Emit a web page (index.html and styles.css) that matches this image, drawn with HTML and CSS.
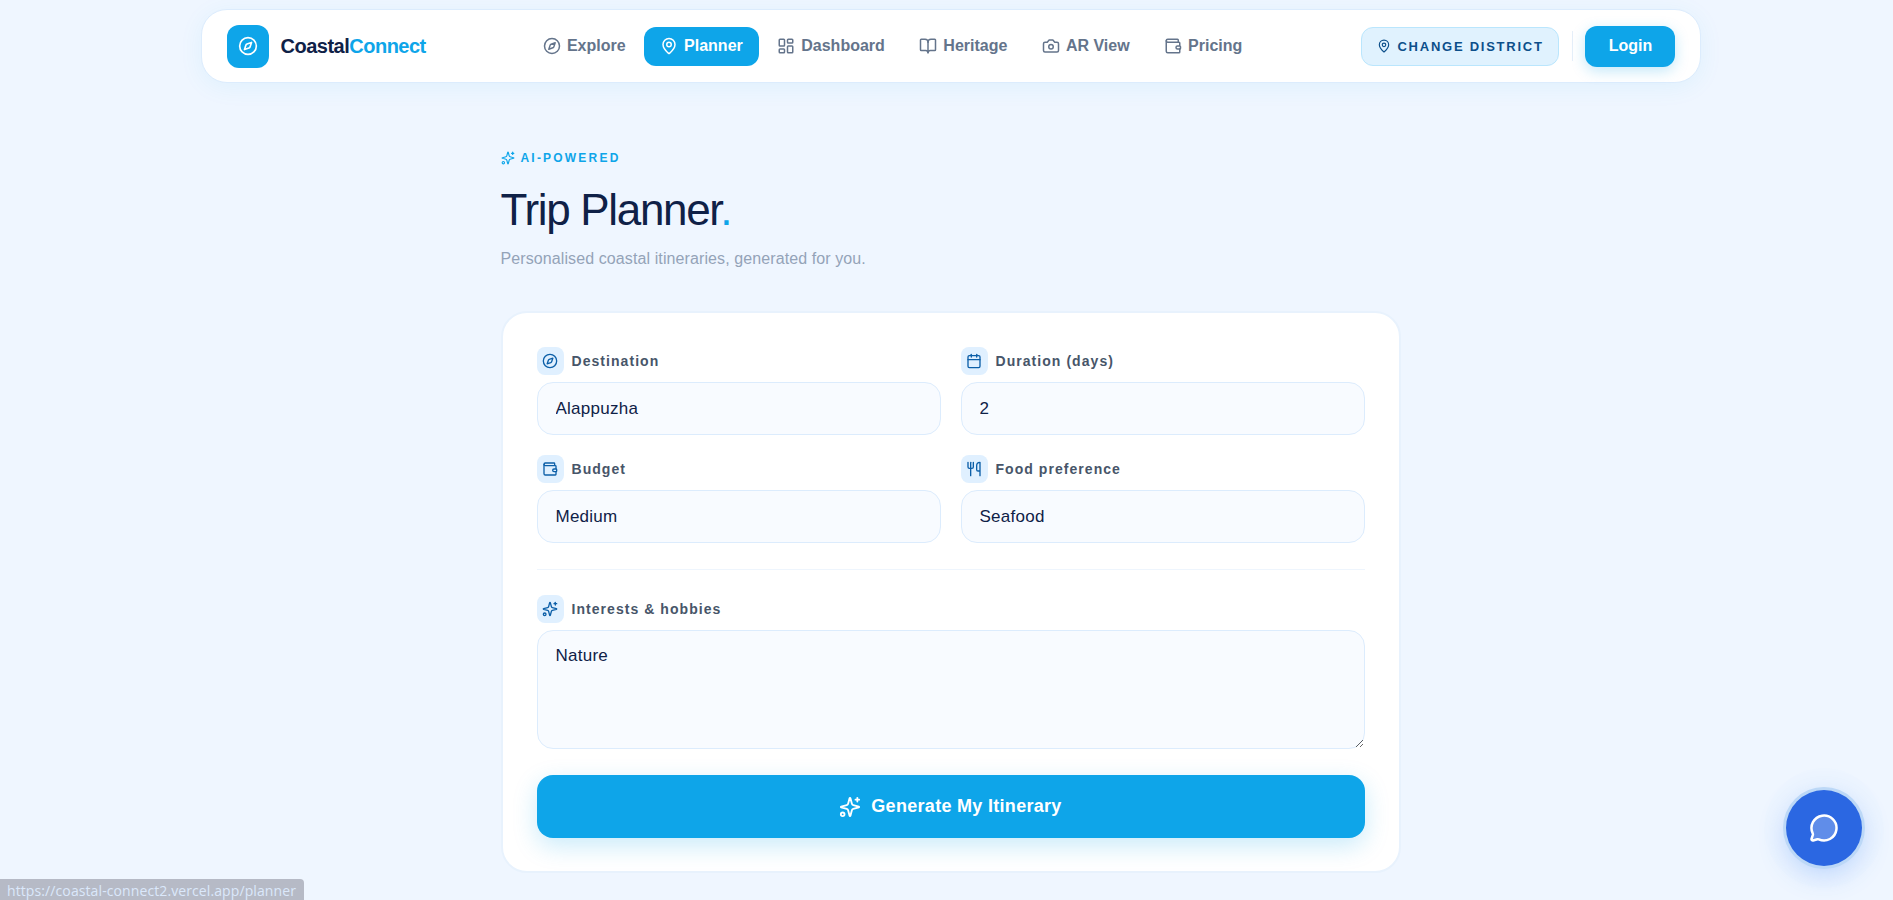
FILE: index.html
```html
<!DOCTYPE html>
<html lang="en">
<head>
  <meta charset="UTF-8" />
  <title>CoastalConnect - Trip Planner</title>
  <link rel="stylesheet" href="styles.css">
</head>
<body>
  <svg class="sprite" aria-hidden="true">
    <symbol id="i-compass" viewBox="0 0 24 24"><circle cx="12" cy="12" r="10"/><path d="m16.24 7.76-1.804 5.411a2 2 0 0 1-1.265 1.265L7.76 16.24l1.804-5.411a2 2 0 0 1 1.265-1.265z"/></symbol>
    <symbol id="i-pin" viewBox="0 0 24 24"><path d="M20 10c0 4.993-5.539 10.193-7.399 11.799a1 1 0 0 1-1.202 0C9.539 20.193 4 14.993 4 10a8 8 0 0 1 16 0"/><circle cx="12" cy="10" r="3"/></symbol>
    <symbol id="i-dashboard" viewBox="0 0 24 24"><rect x="3" y="3" width="7" height="9" rx="1"/><rect x="14" y="3" width="7" height="5" rx="1"/><rect x="14" y="12" width="7" height="9" rx="1"/><rect x="3" y="16" width="7" height="5" rx="1"/></symbol>
    <symbol id="i-book" viewBox="0 0 24 24"><path d="M12 7v14"/><path d="M3 18a1 1 0 0 1-1-1V4a1 1 0 0 1 1-1h5a4 4 0 0 1 4 4 4 4 0 0 1 4-4h5a1 1 0 0 1 1 1v13a1 1 0 0 1-1 1h-6a3 3 0 0 0-3 3 3 3 0 0 0-3-3z"/></symbol>
    <symbol id="i-camera" viewBox="0 0 24 24"><path d="M14.5 4h-5L7 7H4a2 2 0 0 0-2 2v9a2 2 0 0 0 2 2h16a2 2 0 0 0 2-2V9a2 2 0 0 0-2-2h-3l-2.5-3z"/><circle cx="12" cy="13" r="3"/></symbol>
    <symbol id="i-wallet" viewBox="0 0 24 24"><path d="M19 7V4a1 1 0 0 0-1-1H5a2 2 0 0 0 0 4h15a1 1 0 0 1 1 1v4h-3a2 2 0 0 0 0 4h3a1 1 0 0 0 1-1v-2a1 1 0 0 0-1-1"/><path d="M3 5v14a2 2 0 0 0 2 2h15a1 1 0 0 0 1-1v-4"/></symbol>
    <symbol id="i-calendar" viewBox="0 0 24 24"><path d="M8 2v4"/><path d="M16 2v4"/><rect x="3" y="4" width="18" height="18" rx="2"/><path d="M3 10h18"/></symbol>
    <symbol id="i-utensils" viewBox="0 0 24 24"><path d="M3 2v7c0 1.1.9 2 2 2h4a2 2 0 0 0 2-2V2"/><path d="M7 2v20"/><path d="M21 15V2a5 5 0 0 0-5 5v6c0 1.1.9 2 2 2h3Zm0 0v7"/></symbol>
    <symbol id="i-sparkles" viewBox="0 0 24 24"><path d="M9.937 15.5A2 2 0 0 0 8.5 14.063l-6.135-1.582a.5.5 0 0 1 0-.962L8.5 9.936A2 2 0 0 0 9.937 8.5l1.582-6.135a.5.5 0 0 1 .963 0L14.063 8.5A2 2 0 0 0 15.5 9.937l6.135 1.581a.5.5 0 0 1 0 .964L15.5 14.063a2 2 0 0 0-1.437 1.437l-1.582 6.135a.5.5 0 0 1-.963 0z"/><path d="M20 2v4"/><path d="M22 4h-4"/><circle cx="4" cy="20" r="2"/></symbol>
  </svg>

  <div class="page">
    <header class="navbar">
      <a class="brand" href="#">
        <span class="brand-mark"><svg class="icon"><use href="#i-compass"/></svg></span>
        <span class="brand-name">Coastal<span class="accent">Connect</span></span>
      </a>

      <nav class="nav-links">
        <a class="nav-link" href="#"><svg class="icon"><use href="#i-compass"/></svg>Explore</a>
        <a class="nav-link active" href="#"><svg class="icon"><use href="#i-pin"/></svg>Planner</a>
        <a class="nav-link" href="#"><svg class="icon"><use href="#i-dashboard"/></svg>Dashboard</a>
        <a class="nav-link" href="#"><svg class="icon"><use href="#i-book"/></svg>Heritage</a>
        <a class="nav-link" href="#"><svg class="icon"><use href="#i-camera"/></svg>AR View</a>
        <a class="nav-link" href="#"><svg class="icon"><use href="#i-wallet"/></svg>Pricing</a>
      </nav>

      <div class="nav-actions">
        <button class="district-btn"><svg class="icon"><use href="#i-pin"/></svg>CHANGE DISTRICT</button>
        <span class="nav-divider"></span>
        <button class="login-btn">Login</button>
      </div>
    </header>

    <main class="planner">
      <div class="eyebrow"><svg class="icon"><use href="#i-sparkles"/></svg>AI-POWERED</div>
      <h1>Trip Planner<span class="accent">.</span></h1>
      <p class="subtitle">Personalised coastal itineraries, generated for you.</p>

      <form class="card">
        <div class="field-grid">
          <div class="field">
            <label for="destination"><span class="label-icon"><svg class="icon"><use href="#i-compass"/></svg></span>Destination</label>
            <input type="text" id="destination" value="Alappuzha" />
          </div>
          <div class="field">
            <label for="duration"><span class="label-icon"><svg class="icon"><use href="#i-calendar"/></svg></span>Duration (days)</label>
            <input type="text" id="duration" value="2" />
          </div>
          <div class="field">
            <label for="budget"><span class="label-icon"><svg class="icon"><use href="#i-wallet"/></svg></span>Budget</label>
            <input type="text" id="budget" value="Medium" />
          </div>
          <div class="field">
            <label for="food"><span class="label-icon"><svg class="icon"><use href="#i-utensils"/></svg></span>Food preference</label>
            <input type="text" id="food" value="Seafood" />
          </div>
        </div>

        <hr class="divider" />

        <div class="field">
          <label for="interests"><span class="label-icon"><svg class="icon"><use href="#i-sparkles"/></svg></span>Interests &amp; hobbies</label>
          <textarea id="interests">Nature</textarea>
        </div>

        <button type="button" class="generate-btn"><svg class="icon"><use href="#i-sparkles"/></svg>Generate My Itinerary</button>
      </form>
    </main>
  </div>

  <button class="chat-btn" aria-label="Chat">
    <svg viewBox="0 0 24 24"><path d="M2.992 16.342a2 2 0 0 1 .094 1.167l-1.065 3.29a1 1 0 0 0 1.236 1.168l3.413-.998a2 2 0 0 1 1.099.092 10 10 0 1 0-4.777-4.719"/></svg>
  </button>

  <div class="status-link">https://coastal-connect2.vercel.app/planner</div>
</body>
</html>
```

FILE: styles.css
```css
* {
  box-sizing: border-box;
}
html, body {
  height: 100%;
}
body {
  margin: 0;
  background: #eff6ff;
  color: #0f2147;
  font-family: 'Liberation Sans', Arial, sans-serif;
  overflow: hidden;
}
a {
  text-decoration: none;
  color: inherit;
}
button {
  font-family: inherit;
  cursor: pointer;
}
.sprite {
  display: none;
}
.icon {
  width: 18px;
  height: 18px;
  flex: none;
  fill: none;
  stroke: currentColor;
  stroke-width: 2;
  stroke-linecap: round;
  stroke-linejoin: round;
}
.accent {
  color: #0ea5e9;
}
.page {
  padding: 9px 0 0 8px;
}

/* top bar */
.navbar {
  width: 1500px;
  height: 74px;
  margin: 0 auto;
  padding: 0 24px 0 25px;
  display: flex;
  align-items: center;
  justify-content: space-between;
  background: #fff;
  border: 1px solid #dcecfd;
  border-radius: 26px;
  box-shadow: 0 4px 24px rgba(14, 165, 233, 0.07);
}
.brand {
  display: flex;
  align-items: center;
  gap: 12px;
}
.brand-mark {
  width: 42px;
  height: 43px;
  display: flex;
  align-items: center;
  justify-content: center;
  background: #0ea5e9;
  border-radius: 12px;
  color: #fff;
}
.brand-mark .icon {
  width: 20px;
  height: 20px;
}
.brand-name {
  font-size: 20px;
  font-weight: 700;
  letter-spacing: -0.5px;
  color: #0f2147;
}
.nav-links {
  display: flex;
  align-items: center;
  gap: 2.5px;
  margin-right: 2px;
}
.nav-link {
  display: flex;
  align-items: center;
  gap: 6px;
  height: 39px;
  padding: 0 16px;
  border-radius: 12px;
  font-size: 16px;
  font-weight: 700;
  color: #64748b;
}
.nav-link.active {
  background: #0ea5e9;
  color: #fff;
}
.nav-actions {
  display: flex;
  align-items: center;
}
.district-btn {
  display: flex;
  align-items: center;
  gap: 6px;
  height: 39px;
  width: 198px;
  padding: 0 15px;
  background: #e0f2fe;
  border: 1px solid #bae6fd;
  border-radius: 12px;
  font-size: 13px;
  font-weight: 700;
  letter-spacing: 1.75px;
  color: #0c4f8a;
  white-space: nowrap;
}
.district-btn .icon {
  width: 14px;
  height: 14px;
}
.nav-divider {
  width: 1px;
  height: 30px;
  margin: 0 12px 0 13px;
  background: #e5eff9;
}
.login-btn {
  width: 90px;
  height: 41px;
  background: #0ea5e9;
  border: none;
  border-radius: 12px;
  color: #fff;
  font-size: 16px;
  font-weight: 700;
  box-shadow: 0 4px 14px rgba(14, 165, 233, 0.25);
}

/* planner */
.planner {
  width: 900px;
  margin: 0 auto;
  padding-top: 68px;
}
.eyebrow {
  display: flex;
  align-items: center;
  gap: 6px;
  height: 14px;
  font-size: 12px;
  font-weight: 700;
  letter-spacing: 2.2px;
  color: #0ea5e9;
}
.eyebrow .icon {
  width: 14px;
  height: 14px;
}
h1 {
  margin: 19px 0 0;
  font-size: 44px;
  line-height: 52px;
  font-weight: 400;
  letter-spacing: -1.32px;
  color: #0f2147;
}
.subtitle {
  margin: 13px 0 0;
  font-size: 16px;
  line-height: 20px;
  letter-spacing: 0.1px;
  color: #94a3b8;
}
.card {
  margin-top: 42px;
  padding: 34px 34px 33px;
  background: #fff;
  border: 2px solid #e8f2fd;
  border-radius: 26px;
}
.field-grid {
  display: grid;
  grid-template-columns: 1fr 1fr;
  gap: 20px;
}
.field label {
  display: flex;
  align-items: center;
  gap: 8px;
  margin-bottom: 7px;
  font-size: 14px;
  font-weight: 700;
  letter-spacing: 1.05px;
  color: #475569;
}
.label-icon {
  width: 27px;
  height: 28px;
  display: flex;
  align-items: center;
  justify-content: center;
  background: #e0f0ff;
  border-radius: 8px;
  color: #0c5fa8;
}
.label-icon .icon {
  width: 16px;
  height: 16px;
}
.field input,
.field textarea {
  display: block;
  width: 100%;
  padding: 0 18px;
  background: #f8fbff;
  border: 1px solid #dcecfd;
  border-radius: 16px;
  color: #0f2147;
  font-family: inherit;
  font-size: 17px;
  letter-spacing: 0.25px;
  outline: none;
}
.field input {
  height: 53px;
}
.field textarea {
  height: 119px;
  padding-top: 13px;
  line-height: 24px;
  resize: vertical;
}
.divider {
  height: 1px;
  margin: 26px 0 25px;
  border: none;
  background: #eef5fd;
}
.generate-btn {
  width: 100%;
  height: 63px;
  margin-top: 26px;
  display: flex;
  align-items: center;
  justify-content: center;
  gap: 10px;
  background: #0ea5e9;
  border: none;
  border-radius: 16px;
  color: #fff;
  font-size: 18px;
  font-weight: 700;
  letter-spacing: 0.3px;
  box-shadow: 0 8px 24px rgba(14, 165, 233, 0.22);
}
.generate-btn .icon {
  width: 22px;
  height: 22px;
}

/* floating bits */
.chat-btn {
  position: fixed;
  right: 31px;
  bottom: 34px;
  width: 76px;
  height: 76px;
  display: flex;
  align-items: center;
  justify-content: center;
  padding: 0;
  background: #2b67e2;
  border: none;
  border-radius: 50%;
  box-shadow: 0 0 0 3px #bcd8f7, 0 8px 28px rgba(59, 130, 246, 0.3), 0 0 0 22px rgba(59, 130, 246, 0.012);
}
.chat-btn svg {
  width: 30px;
  height: 30px;
  fill: rgba(255, 255, 255, 0.25);
  stroke: #fff;
  stroke-width: 2;
  stroke-linecap: round;
  stroke-linejoin: round;
}
.status-link {
  position: fixed;
  left: 0;
  bottom: 0;
  width: 304px;
  height: 21px;
  padding: 2px 0 0 7px;
  background: #b6bac6;
  border-top-right-radius: 4px;
  color: #dbe8fb;
  font-family: 'Open Sans', sans-serif;
  font-size: 14px;
  letter-spacing: 0.1px;
  line-height: 19px;
  white-space: nowrap;
}
```
